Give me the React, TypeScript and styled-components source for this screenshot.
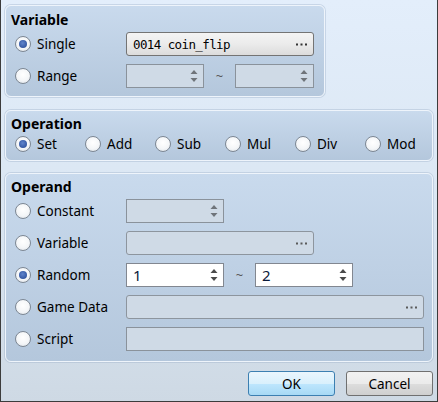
import React from "react";
import styled, { createGlobalStyle } from "styled-components";

const GlobalStyle = createGlobalStyle`
  html, body {
    margin: 0;
    padding: 0;
  }
  body {
    font-family: "Noto Sans", "DejaVu Sans", sans-serif;
    font-size: 13px;
    color: #000;
  }
`;

const Dialog = styled.div`
  width: 438px;
  height: 402px;
  box-sizing: border-box;
  border: 1px solid #3c3c3c;
  border-top: none;
  background: linear-gradient(to bottom, #e3eefb 0%, #d9e5f1 60%, #ced9e4 100%);
  padding: 5px 4px 0 4px;
  display: flex;
  flex-direction: column;
`;

interface GroupProps {
  width?: number;
  gap: number;
  pb: number;
  mt?: number;
}

const Group = styled.div<GroupProps>`
  box-sizing: border-box;
  width: ${(p) => (p.width ? `${p.width}px` : "100%")};
  margin-top: ${(p) => p.mt || 0}px;
  border: 1px solid #eef4fb;
  border-radius: 6px;
  box-shadow: 0 0 0 1px rgba(150, 170, 195, 0.35);
  background: linear-gradient(to bottom, #c9daed 0%, #b4c7dc 100%);
  padding: 0 0 ${(p) => p.pb}px 0;
  display: flex;
  flex-direction: column;
  gap: ${(p) => p.gap}px;
`;

const GroupTitle = styled.div<{ h: number }>`
  height: ${(p) => p.h}px;
  display: flex;
  align-items: flex-end;
  padding-left: 5px;
  font-weight: 700;
  font-size: 14px;
  line-height: 16px;
  color: #000;
`;

const Row = styled.div`
  height: 24px;
  display: flex;
  align-items: center;
  padding-left: 9px;
`;

const Choice = styled.label<{ w?: number }>`
  width: ${(p) => (p.w ? `${p.w}px` : "auto")};
  flex: none;
  display: flex;
  align-items: center;
  gap: 6px;
  font-size: 13.5px;
  color: #000;
`;

const RadioCircle = styled.span<{ checked?: boolean }>`
  position: relative;
  width: 16px;
  height: 16px;
  box-sizing: border-box;
  border-radius: 50%;
  border: 1px solid #7d8793;
  background: radial-gradient(circle at 50% 40%, #ffffff 0%, #f4f6f8 55%, #d9dfe6 100%);
  flex: none;

  &::after {
    content: "";
    display: ${(p) => (p.checked ? "block" : "none")};
    position: absolute;
    left: 3px;
    top: 3px;
    width: 8px;
    height: 8px;
    border-radius: 50%;
    background: radial-gradient(circle at 45% 40%, #5f84cc 0%, #3a5ea9 60%, #2c4b8c 100%);
  }
`;

const Field = styled.div<{ w: number; enabled?: boolean }>`
  box-sizing: border-box;
  width: ${(p) => p.w}px;
  height: 24px;
  flex: none;
  display: flex;
  align-items: center;
  justify-content: space-between;
  border: 1px solid ${(p) => (p.enabled ? "#828790" : "#8a929b")};
  background: ${(p) => (p.enabled ? "#ffffff" : "#cfdae6")};
  padding: 0 5px 0 6px;
  font-size: 15px;
  color: #0b1a3a;
`;

const PickButton = styled.div<{ w: number; enabled?: boolean }>`
  box-sizing: border-box;
  width: ${(p) => p.w}px;
  height: 24px;
  flex: none;
  display: flex;
  align-items: center;
  justify-content: space-between;
  border: 1px solid ${(p) => (p.enabled ? "#747474" : "#8d959e")};
  border-radius: 3px;
  background: ${(p) =>
    p.enabled
      ? "linear-gradient(to bottom, #f4f4f4 0%, #ebebeb 50%, #dcdcdc 100%)"
      : "#cfdae6"};
  padding: 0 6px 0 6px;
`;

const MonoText = styled.span`
  font-family: "DejaVu Sans Mono", "Liberation Mono", monospace;
  font-size: 12.5px;
  letter-spacing: -0.6px;
  color: #000;
`;

const Tilde = styled.span`
  width: 31px;
  flex: none;
  text-align: center;
  font-size: 13px;
  color: #555;
`;

const Footer = styled.div`
  margin-top: 9px;
  display: flex;
  justify-content: flex-end;
  gap: 11px;
`;

const DlgButton = styled.div<{ primary?: boolean }>`
  box-sizing: border-box;
  width: 87px;
  height: 25px;
  display: flex;
  align-items: center;
  justify-content: center;
  border-radius: 3px;
  border: 1px solid ${(p) => (p.primary ? "#3c7fb1" : "#707070")};
  background: ${(p) =>
    p.primary
      ? "linear-gradient(to bottom, #eaf6fd 0%, #d9f0fc 50%, #bee6fd 51%, #a7d9f5 100%)"
      : "linear-gradient(to bottom, #f2f2f2 0%, #ebebeb 50%, #dddddd 51%, #cfcfcf 100%)"};
  font-size: 13.5px;
  color: #000;
`;

const Spin = ({ dark }: { dark?: boolean }) => (
  <svg width="8" height="14" viewBox="0 0 8 14">
    <polygon points="4,1 7.5,5 0.5,5" fill={dark ? "#4a4a4a" : "#6f747a"} />
    <polygon points="0.5,9 7.5,9 4,13" fill={dark ? "#4a4a4a" : "#6f747a"} />
  </svg>
);

const Dots = ({ color }: { color: string }) => (
  <svg width="11" height="3" viewBox="0 0 11 3">
    <rect x="0" y="0.5" width="2" height="2" fill={color} />
    <rect x="4.5" y="0.5" width="2" height="2" fill={color} />
    <rect x="9" y="0.5" width="2" height="2" fill={color} />
  </svg>
);

const Radio = ({ label, checked, w }: { label: string; checked?: boolean; w?: number }) => (
  <Choice w={w}>
    <RadioCircle checked={checked} />
    {label}
  </Choice>
);

const App = () => {
  const ops = ["Set", "Add", "Sub", "Mul", "Div", "Mod"];

  return (
    <>
      <GlobalStyle />
      <Dialog>
        <Group width={320} gap={8} pb={8}>
          <GroupTitle h={22} style={{ marginBottom: -4 }}>
            Variable
          </GroupTitle>
          <Row>
            <Radio label="Single" checked w={111} />
            <PickButton w={188} enabled>
              <MonoText>0014 coin_flip</MonoText>
              <Dots color="#333" />
            </PickButton>
          </Row>
          <Row>
            <Radio label="Range" w={111} />
            <Field w={78}>
              <span />
              <Spin />
            </Field>
            <Tilde>~</Tilde>
            <Field w={79}>
              <span />
              <Spin />
            </Field>
          </Row>
        </Group>

        <Group gap={0} pb={4} mt={13}>
          <GroupTitle h={21}>Operation</GroupTitle>
          <Row>
            {ops.map((op, i) => (
              <Radio key={op} label={op} checked={i === 0} w={70} />
            ))}
          </Row>
        </Group>

        <Group gap={8} pb={10} mt={12}>
          <GroupTitle h={21} style={{ marginBottom: -4 }}>
            Operand
          </GroupTitle>
          <Row>
            <Radio label="Constant" w={111} />
            <Field w={98}>
              <span />
              <Spin />
            </Field>
          </Row>
          <Row>
            <Radio label="Variable" w={111} />
            <PickButton w={188}>
              <span />
              <Dots color="#5a5a5a" />
            </PickButton>
          </Row>
          <Row>
            <Radio label="Random" checked w={111} />
            <Field w={98} enabled>
              <span>1</span>
              <Spin dark />
            </Field>
            <Tilde>~</Tilde>
            <Field w={98} enabled>
              <span>2</span>
              <Spin dark />
            </Field>
          </Row>
          <Row>
            <Radio label="Game Data" w={111} />
            <PickButton w={298}>
              <span />
              <Dots color="#5a5a5a" />
            </PickButton>
          </Row>
          <Row>
            <Radio label="Script" w={111} />
            <Field w={298} />
          </Row>
        </Group>

        <Footer>
          <DlgButton primary>OK</DlgButton>
          <DlgButton>Cancel</DlgButton>
        </Footer>
      </Dialog>
    </>
  );
};

export default App;
